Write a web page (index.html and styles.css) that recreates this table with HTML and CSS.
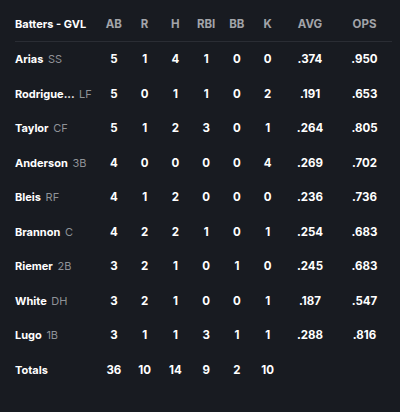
FILE: index.html
```html
<!DOCTYPE html>
<html>
<head>
<meta charset="utf-8">
<link rel="stylesheet" href="styles.css">
</head>
<body>
<div class="box">
  <div class="row head">
    <div class="name">Batters - GVL</div>
    <div>AB</div><div>R</div><div>H</div><div>RBI</div><div>BB</div><div>K</div><div>AVG</div><div>OPS</div>
  </div>
  <div class="row"><div class="name">Arias <span class="pos">SS</span></div><div>5</div><div>1</div><div>4</div><div>1</div><div>0</div><div>0</div><div>.374</div><div>.950</div></div>
  <div class="row"><div class="name">Rodrigue... <span class="pos">LF</span></div><div>5</div><div>0</div><div>1</div><div>1</div><div>0</div><div>2</div><div>.191</div><div>.653</div></div>
  <div class="row"><div class="name">Taylor <span class="pos">CF</span></div><div>5</div><div>1</div><div>2</div><div>3</div><div>0</div><div>1</div><div>.264</div><div>.805</div></div>
  <div class="row"><div class="name">Anderson <span class="pos">3B</span></div><div>4</div><div>0</div><div>0</div><div>0</div><div>0</div><div>4</div><div>.269</div><div>.702</div></div>
  <div class="row"><div class="name">Bleis <span class="pos">RF</span></div><div>4</div><div>1</div><div>2</div><div>0</div><div>0</div><div>0</div><div>.236</div><div>.736</div></div>
  <div class="row"><div class="name">Brannon <span class="pos">C</span></div><div>4</div><div>2</div><div>2</div><div>1</div><div>0</div><div>1</div><div>.254</div><div>.683</div></div>
  <div class="row"><div class="name">Riemer <span class="pos">2B</span></div><div>3</div><div>2</div><div>1</div><div>0</div><div>1</div><div>0</div><div>.245</div><div>.683</div></div>
  <div class="row"><div class="name">White <span class="pos">DH</span></div><div>3</div><div>2</div><div>1</div><div>0</div><div>0</div><div>1</div><div>.187</div><div>.547</div></div>
  <div class="row"><div class="name">Lugo <span class="pos">1B</span></div><div>3</div><div>1</div><div>1</div><div>3</div><div>1</div><div>1</div><div>.288</div><div>.816</div></div>
  <div class="row"><div class="name">Totals</div><div>36</div><div>10</div><div>14</div><div>9</div><div>2</div><div>10</div><div></div><div></div></div>
</div>
</body>
</html>
```
FILE: styles.css
```css
html, body {
  margin: 0;
  background: #181b21;
}
body {
  font-family: Inter, "Liberation Sans", sans-serif;
  font-size: 11.5px;
  color: #ffffff;
  width: 400px;
  height: 412px;
  overflow: hidden;
}
.box {
  padding: 7px 8px 0 15px;
}
.row {
  display: grid;
  grid-template-columns: 83.5px repeat(6, 30.75px) 54px 55px;
  height: 34.5px;
  align-items: center;
  text-align: center;
  font-weight: 700;
}
.row .name {
  font-size: 11px;
  text-align: left;
  white-space: nowrap;
}
.head {
  height: 34px;
  border-bottom: 1px solid #2a2d34;
  color: #a2a4a9;
}
.head .name {
  color: #ffffff;
}
.pos {
  font-weight: 400;
  color: #8f9297;
  margin-left: 2px;
}
```
